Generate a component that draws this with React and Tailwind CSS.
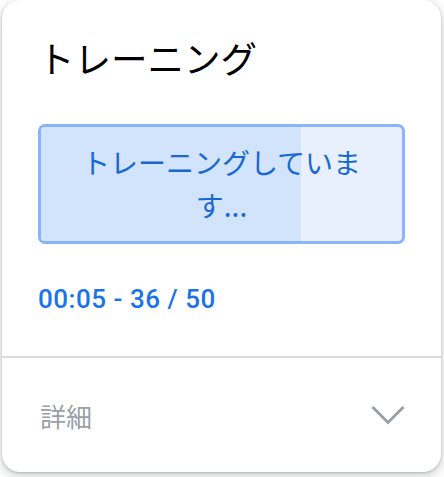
import { useState } from 'react'

const jp = { fontFamily: '"Noto Sans CJK JP", "Noto Sans", sans-serif' }
const num = { fontFamily: 'Roboto, "Noto Sans", sans-serif' }

function Chevron({ open }) {
  return (
    <svg
      viewBox="0 0 34 20"
      className={`h-[20px] w-[34px] text-[#9aa0a6] ${open ? 'rotate-180' : ''}`}
      fill="none"
      stroke="currentColor"
      strokeWidth="3"
    >
      <path d="M1.5 2 17 17.5 32.5 2" />
    </svg>
  )
}

export default function App() {
  const [open, setOpen] = useState(false)
  const done = 36
  const total = 50

  return (
    <div className="min-h-[477px] bg-white pl-[2px] pr-[3px] pb-[7px]">
      <div className="overflow-hidden rounded-[18px] bg-white shadow-[0_1px_3px_rgba(60,64,67,0.3),0_4px_8px_3px_rgba(60,64,67,0.15)]">
        <div className="px-[36px] pt-[38px] pb-[42px]">
          <h1 className="text-[36.5px] leading-[40px] text-black" style={jp}>
            トレーニング
          </h1>

          <div className="relative mt-[46px] overflow-hidden rounded-[7px] border-[3px] border-[#8ab4f8] bg-[#e8f0fe]">
            <div
              className="absolute inset-y-0 left-0 bg-[#d2e3fc]"
              style={{ width: `${(done / total) * 100}%` }}
            />
            <p
              className="relative px-[36px] py-[14px] text-center text-[28px] leading-[43px] text-[#1967d2]"
              style={jp}
            >
              トレーニングしています...
            </p>
          </div>

          <p
            className="mt-[40px] text-[26px] font-medium leading-[30px] tracking-[0.02em] text-[#1a73e8]"
            style={num}
          >
            00:05 - {done} / {total}
          </p>
        </div>

        <div className="border-t-2 border-[#dadce0]">
          <button
            type="button"
            onClick={() => setOpen(!open)}
            className="flex h-[114px] w-full items-center justify-between pl-[38px] pr-[36px]"
          >
            <span className="text-[26px] text-[#9aa0a6]" style={jp}>
              詳細
            </span>
            <Chevron open={open} />
          </button>
        </div>
      </div>
    </div>
  )
}
